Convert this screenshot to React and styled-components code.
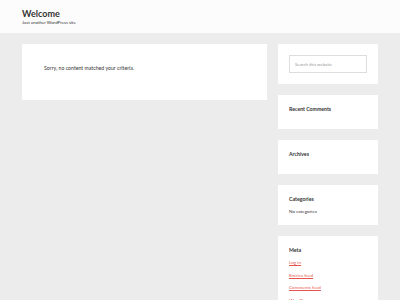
import React from 'react';
import styled, { createGlobalStyle } from 'styled-components';

const GlobalStyle = createGlobalStyle`
    html, body {
        margin: 0;
        padding: 0;
        background: #ececec;
        font-family: Lato, "Open Sans", sans-serif;
        color: #333;
    }
`;

function Widget({ title, children }) {
    return (
        <WidgetCard>
            {title && <WidgetTitle>{title}</WidgetTitle>}
            {children}
        </WidgetCard>
    )
}

function App() {
    return (
        <>
            <GlobalStyle />
            <Header>
                <Wrap>
                    <SiteTitle>Welcome</SiteTitle>
                    <Tagline>Just another WordPress site</Tagline>
                </Wrap>
            </Header>

            <Main>
                <Content>
                    <p>Sorry, no content matched your criteria.</p>
                </Content>

                <Sidebar>
                    <Widget>
                        <SearchInput placeholder="Search this website" />
                    </Widget>

                    <Widget title="Recent Comments" />
                    <Widget title="Archives" />

                    <Widget title="Categories">
                        <List>
                            <li>No categories</li>
                        </List>
                    </Widget>

                    <Widget title="Meta">
                        <List>
                            <li><a href="#">Log in</a></li>
                            <li><a href="#">Entries feed</a></li>
                            <li><a href="#">Comments feed</a></li>
                            <li><a href="#">WordPress.org</a></li>
                        </List>
                    </Widget>
                </Sidebar>
            </Main>
        </>
    )
}

const Header = styled.header`
    background-color: #fcfcfc;
    height: 33px;
`;

const Wrap = styled.div`
    width: 356px;
    margin: 0 auto;
    padding-top: 9px;
    box-sizing: border-box;
`;

const SiteTitle = styled.h1`
    margin: 0;
    font-size: 9px;
    line-height: 10px;
    font-weight: 700;
    color: #333;
`;

const Tagline = styled.p`
    margin: 1px 0 0;
    font-size: 4.4px;
    line-height: 5px;
    color: #333;
`;

const Main = styled.div`
    display: flex;
    align-items: flex-start;
    gap: 11px;
    width: 356px;
    margin: 0 auto;
    padding-top: 11px;
`;

const Content = styled.div`
    width: 245px;
    height: 56px;
    box-sizing: border-box;
    background-color: #fff;
    padding: 20px 22px;

    & > p {
        margin: 0;
        font-size: 5.2px;
        line-height: 8px;
        color: #333;
    }
`;

const Sidebar = styled.aside`
    width: 100px;
    display: flex;
    flex-direction: column;
    gap: 11px;
`;

const WidgetCard = styled.section`
    background-color: #fff;
    padding: 11px;
`;

const WidgetTitle = styled.h3`
    margin: 0 0 6px;
    font-size: 5.2px;
    line-height: 6px;
    font-weight: 700;
    color: #333;
`;

const SearchInput = styled.input`
    display: block;
    width: 100%;
    height: 18px;
    box-sizing: border-box;
    border: 1px solid #ddd;
    background: #fff;
    padding: 0 5px;
    font-family: Lato, "Open Sans", sans-serif;
    font-size: 4.4px;
    color: #333;
    outline: none;

    &::placeholder {
        color: #999;
    }
`;

const List = styled.ul`
    list-style: none;
    margin: 0;
    padding: 0;
    display: flex;
    flex-direction: column;
    gap: 6.5px;

    & > li {
        font-size: 4.6px;
        line-height: 6px;
        color: #333;
    }

    & a {
        color: #e5554e;
        text-decoration: underline;
    }
`;

export default App
